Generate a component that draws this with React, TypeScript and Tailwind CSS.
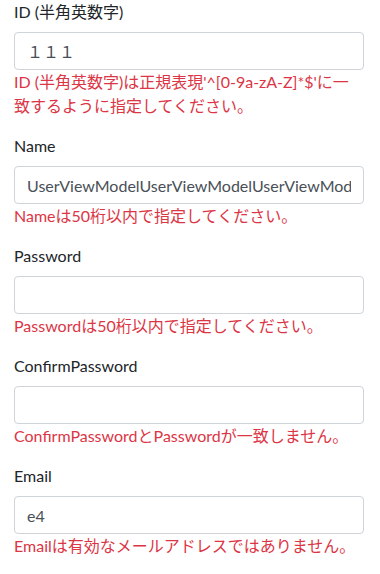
import React from "react";

const fields = [
  {
    label: "ID (半角英数字)",
    value: "１１１",
    error: "ID (半角英数字)は正規表現'^[0-9a-zA-Z]*$'に一致するように指定してください。",
  },
  {
    label: "Name",
    value: "UserViewModelUserViewModelUserViewModelUserViewModel",
    error: "Nameは50桁以内で指定してください。",
  },
  { label: "Password", value: "", error: "Passwordは50桁以内で指定してください。" },
  {
    label: "ConfirmPassword",
    value: "",
    error: "ConfirmPasswordとPasswordが一致しません。",
  },
  { label: "Email", value: "e4", error: "Emailは有効なメールアドレスではありません。" },
];

export default function App() {
  return (
    <div
      className="min-h-[574px] w-[380px] bg-white pl-[14px] pr-[16px] text-[16px]"
      style={{ fontFamily: 'Lato, "Noto Sans CJK JP", sans-serif' }}
    >
      {fields.map((f) => (
        <div key={f.label} className="mb-4">
          <div className="mb-2 leading-[24px] text-[#212529]">{f.label}</div>
          <input
            readOnly
            value={f.value}
            className="block h-[38px] w-full rounded-[4px] border border-[#ced4da] bg-white px-3 text-[16px] leading-[24px] text-[#495057] outline-none"
            style={{ fontFamily: 'Lato, "Noto Sans CJK JP", sans-serif' }}
          />
          <div className="leading-[24px] text-[#dc3545]">{f.error}</div>
        </div>
      ))}
    </div>
  );
}
